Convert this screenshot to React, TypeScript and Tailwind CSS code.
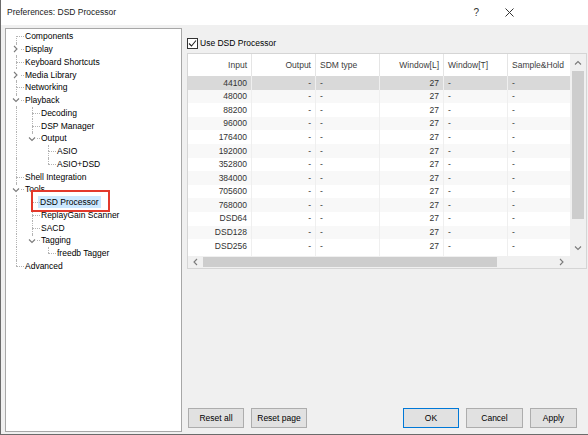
import React from "react";

type TNode = {
  label: string;
  level: number;
  guides: boolean[];
  first?: boolean;
  last?: boolean;
  exp?: "open" | "closed";
  selected?: boolean;
};

const nodes: TNode[] = [
  { label: "Components", level: 0, guides: [], first: true },
  { label: "Display", level: 0, guides: [], exp: "closed" },
  { label: "Keyboard Shortcuts", level: 0, guides: [] },
  { label: "Media Library", level: 0, guides: [], exp: "closed" },
  { label: "Networking", level: 0, guides: [] },
  { label: "Playback", level: 0, guides: [], exp: "open" },
  { label: "Decoding", level: 1, guides: [true] },
  { label: "DSP Manager", level: 1, guides: [true] },
  { label: "Output", level: 1, guides: [true], exp: "open", last: true },
  { label: "ASIO", level: 2, guides: [true, false] },
  { label: "ASIO+DSD", level: 2, guides: [true, false], last: true },
  { label: "Shell Integration", level: 0, guides: [] },
  { label: "Tools", level: 0, guides: [], exp: "open" },
  { label: "DSD Processor", level: 1, guides: [true], selected: true },
  { label: "ReplayGain Scanner", level: 1, guides: [true] },
  { label: "SACD", level: 1, guides: [true] },
  { label: "Tagging", level: 1, guides: [true], exp: "open", last: true },
  { label: "freedb Tagger", level: 2, guides: [true, false], last: true },
  { label: "Advanced", level: 0, guides: [], last: true },
];

function Chevron({ dir }: { dir: "right" | "down" | "left" | "up" }) {
  const d =
    dir === "right"
      ? "M2 1 L5 4 L2 7"
      : dir === "left"
      ? "M5 1 L2 4 L5 7"
      : dir === "down"
      ? "M1 2.5 L4 5.5 L7 2.5"
      : "M1 5.5 L4 2.5 L7 5.5";
  return (
    <svg width="8" height="8" viewBox="0 0 8 8" className="block">
      <path d={d} fill="none" stroke="#7a7a7a" strokeWidth="1.1" />
    </svg>
  );
}

function TreeRow({ n }: { n: TNode }) {
  return (
    <div className="flex h-[12.75px] items-center">
      {n.guides.map((g, i) => (
        <div key={i} className="flex h-full w-4 shrink-0 justify-center">
          {g && <div className="h-full w-0 border-l border-dotted border-[#b4b4b4]" />}
        </div>
      ))}
      <div className="relative h-full w-4 shrink-0">
        {!n.first && (
          <div className="absolute left-[8px] top-0 h-1/2 w-0 border-l border-dotted border-[#b4b4b4]" />
        )}
        {!n.last && (
          <div className="absolute bottom-0 left-[8px] h-1/2 w-0 border-l border-dotted border-[#b4b4b4]" />
        )}
        <div className="absolute left-[8px] right-0 top-1/2 h-0 border-t border-dotted border-[#b4b4b4]" />
        {n.exp && (
          <div className="absolute left-[3px] top-[2px] flex h-[9px] w-[10px] items-center justify-center bg-white">
            <Chevron dir={n.exp === "open" ? "down" : "right"} />
          </div>
        )}
      </div>
      <span
        className={
          n.selected
            ? "ml-[-2px] whitespace-nowrap bg-[#cce8ff] px-[2px] leading-[12px]"
            : "whitespace-nowrap pl-[1px] leading-[12px]"
        }
      >
        {n.label}
      </span>
    </div>
  );
}

const inputs = [
  "44100",
  "48000",
  "88200",
  "96000",
  "176400",
  "192000",
  "352800",
  "384000",
  "705600",
  "768000",
  "DSD64",
  "DSD128",
  "DSD256",
];

const cols = [
  { h: "Input", right: true },
  { h: "Output", right: true },
  { h: "SDM type", right: false },
  { h: "Window[L]", right: true },
  { h: "Window[T]", right: false },
  { h: "Sample&Hold", right: false },
  { h: "", right: false },
];

function Btn({ label, primary, w }: { label: string; primary?: boolean; w: string }) {
  return (
    <div
      className={
        "flex h-[20px] shrink-0 items-center justify-center bg-[#e1e1e1] text-black " +
        w +
        (primary ? " border border-[#0078d7]" : " border border-[#adadad]")
      }
    >
      {label}
    </div>
  );
}

export default function App() {
  return (
    <div className="relative h-[435px] w-[588px] overflow-hidden border-b border-l border-[#6b6b6b] bg-[#f0f0f0] font-['Liberation_Sans',Arial,sans-serif] text-[8.5px] text-black">
      {/* title bar */}
      <div className="flex h-[25px] items-center bg-white pl-[6px]">
        <span className="text-[#1a1a1a]">Preferences: DSD Processor</span>
        <div className="ml-auto mr-[74px] flex items-center gap-[26px] text-[10px] text-[#333]">
          <span>?</span>
          <svg width="9" height="9" viewBox="0 0 9 9">
            <path d="M0.5 0.5 L8.5 8.5 M8.5 0.5 L0.5 8.5" stroke="#333" strokeWidth="1" />
          </svg>
        </div>
      </div>

      <div className="flex pl-[4px] pt-[3px]">
        {/* tree */}
        <div className="h-[404px] w-[177px] shrink-0 border border-[#a7a7a7] bg-white pl-[2px] pt-[1px]">
          {nodes.map((n, i) => (
            <TreeRow key={i} n={n} />
          ))}
        </div>

        {/* right pane */}
        <div className="ml-[5px] flex w-[400px] flex-col pt-[9px]">
          <div className="flex h-[12px] items-center">
            <div className="flex h-[11px] w-[11px] items-center justify-center border border-[#333] bg-white">
              <svg width="9" height="9" viewBox="0 0 9 9">
                <path d="M1 4.5 L3.5 7 L8 1.5" fill="none" stroke="#222" strokeWidth="1.1" />
              </svg>
            </div>
            <span className="ml-[2px]">Use DSD Processor</span>
          </div>

          {/* table */}
          <div className="mt-[4px] flex h-[216px] flex-col border border-[#d5d5d5] bg-white">
            <div className="flex h-[202px]">
              <div className="flex w-[382px] flex-col overflow-hidden">
                <div className="flex h-[22px] shrink-0 text-[#3c3c3c]">
                  {cols.map((c, i) => (
                    <div
                      key={i}
                      className={
                        "flex w-[64px] shrink-0 items-center border-r border-[#e5e5e5] whitespace-nowrap " +
                        (c.right ? "justify-end pr-[4px]" : "justify-start pl-[4px]")
                      }
                    >
                      {c.h}
                    </div>
                  ))}
                </div>
                {inputs.map((v, r) => (
                  <div
                    key={r}
                    className={
                      "flex h-[13.6px] shrink-0 text-[#333] " +
                      (r === 0 ? "bg-[#d9d9d9]" : r % 2 === 1 ? "bg-[#f8f8f8]" : "bg-white")
                    }
                  >
                    {cols.map((c, i) => (
                      <div
                        key={i}
                        className={
                          "flex w-[64px] shrink-0 items-center border-r border-[#efefef] leading-none " +
                          (c.right ? "justify-end pr-[4px]" : "justify-start pl-[4px]")
                        }
                      >
                        {i === 0 ? v : i === 3 ? "27" : i === 6 ? "" : "-"}
                      </div>
                    ))}
                  </div>
                ))}
                <div className="flex flex-1">
                  {cols.map((c, i) => (
                    <div key={i} className="w-[64px] shrink-0 border-r border-[#efefef]" />
                  ))}
                </div>
              </div>
              {/* vertical scrollbar */}
              <div className="flex w-[16px] shrink-0 flex-col items-center bg-[#f0f0f0]">
                <div className="flex h-[17px] items-center justify-center">
                  <Chevron dir="up" />
                </div>
                <div className="h-[148px] w-[12px] bg-[#cdcdcd]" />
                <div className="flex-1" />
                <div className="flex h-[17px] items-center justify-center">
                  <Chevron dir="down" />
                </div>
              </div>
            </div>
            {/* horizontal scrollbar */}
            <div className="flex h-[12px] bg-[#f0f0f0]">
              <div className="flex w-[15px] items-center justify-center">
                <Chevron dir="left" />
              </div>
              <div className="my-[1px] w-[294px] bg-[#cdcdcd]" />
              <div className="flex-1" />
              <div className="flex w-[16px] items-center justify-center">
                <Chevron dir="right" />
              </div>
              <div className="w-[16px]" />
            </div>
          </div>

          {/* buttons */}
          <div className="mt-[139px] flex">
            <div className="ml-[1px]">
              <Btn label="Reset all" w="w-[56px]" />
            </div>
            <div className="ml-[7px]">
              <Btn label="Reset page" w="w-[56px]" />
            </div>
            <div className="ml-[96px]">
              <Btn label="OK" primary w="w-[56px]" />
            </div>
            <div className="ml-[7px]">
              <Btn label="Cancel" w="w-[57px]" />
            </div>
            <div className="ml-[7px]">
              <Btn label="Apply" w="w-[47px]" />
            </div>
          </div>
        </div>
      </div>

      {/* red highlight annotation */}
      <div className="pointer-events-none absolute left-[30px] top-[190px] h-[22px] w-[79px] border-2 border-[#e3392c]" />
    </div>
  );
}
